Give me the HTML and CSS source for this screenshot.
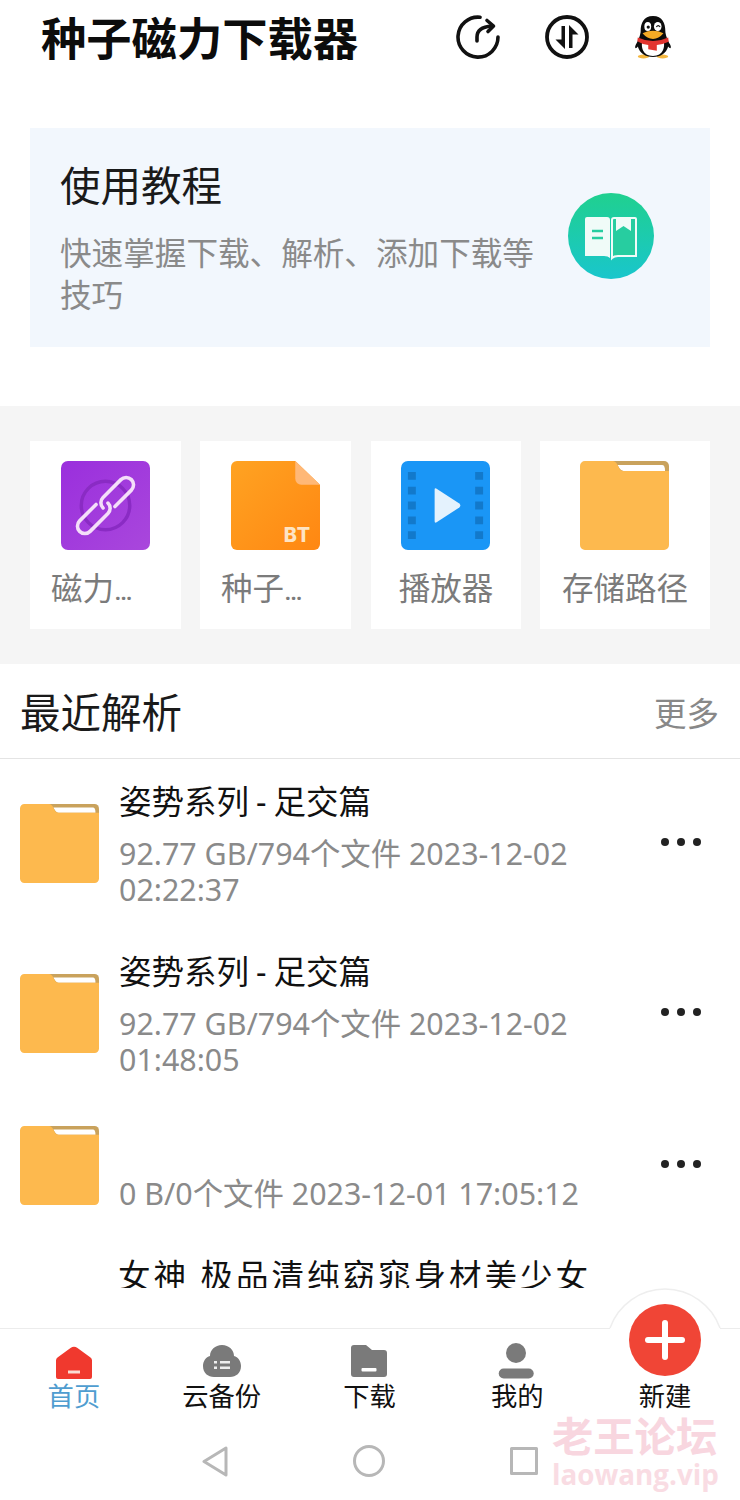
FILE: index.html

```html
<!DOCTYPE html>
<html lang="zh-CN">
<head>
  <meta charset="UTF-8" />
  <meta name="viewport" content="width=device-width, initial-scale=1.0"/>
  <title>种子磁力下载器</title>
  <link rel="stylesheet" href="styles.css">
</head>
<body>
  <svg class="defs" width="0" height="0">
    <symbol id="folder" viewBox="0 0 90 90">
      <path d="M30 0H85a5 5 0 0 1 5 5V20H30Z" fill="#c9a25c"/>
      <path d="M38 4H83q3 0 3 6H44q-3 0-6-6Z" fill="#fff"/>
      <path d="M5 0H33q3 0 5 4l2 4q1 2 4 2H90V85a5 5 0 0 1-5 5H5a5 5 0 0 1-5-5V5a5 5 0 0 1 5-5Z" fill="#fdb94e"/>
    </symbol>
    <linearGradient id="purple" x1="0" y1="0" x2="1" y2="1">
      <stop offset="0" stop-color="#9a2fdd"/>
      <stop offset="1" stop-color="#a947dc"/>
    </linearGradient>
    <linearGradient id="orange" x1="0" y1="0" x2="1" y2="1">
      <stop offset="0" stop-color="#ffa322"/>
      <stop offset="1" stop-color="#ff8712"/>
    </linearGradient>
    <linearGradient id="teal" x1="0" y1="0" x2="0" y2="1">
      <stop offset="0" stop-color="#20d08f"/>
      <stop offset="1" stop-color="#19c6cc"/>
    </linearGradient>
  </svg>

  <header class="top-bar">
    <h1 class="app-title">种子磁力下载器</h1>
    <div class="top-icons">
      <svg class="top-icon" viewBox="0 0 44 44" fill="none" stroke="#111" stroke-width="3.6" stroke-linecap="round" stroke-linejoin="round">
        <path d="M24 2.2A20 20 0 1 0 42 22"/>
        <path d="M21 26V22Q21 12 36 11"/>
        <path d="M31 5.5L37.5 11L32 16.5"/>
      </svg>
      <svg class="top-icon" viewBox="0 0 44 44">
        <circle cx="22" cy="22" r="20" fill="none" stroke="#111" stroke-width="3.8"/>
        <path d="M16.5 11H20V34L10.5 24.5H16.5Z" fill="#111"/>
        <path d="M27.5 33H24V10L33.5 19.5H27.5Z" fill="#111"/>
      </svg>
      <svg class="qq-icon" viewBox="0 0 40 46">
        <ellipse cx="10" cy="43.5" rx="6" ry="2" fill="#f4b73f"/>
        <ellipse cx="30" cy="43.5" rx="6" ry="2" fill="#f4b73f"/>
        <path d="M20 1C10 1 7 9 7 17C7 20 5 26 2 31C0 35 2 36 4 33C6 40 12 44 20 44C28 44 34 40 36 33C38 36 40 35 38 31C35 26 33 20 33 17C33 9 30 1 20 1Z" fill="#0c0c0c"/>
        <path d="M9 27C12 30 28 30 31 27C33 33 31 43 20 43C9 43 7 33 9 27Z" fill="#fff"/>
        <ellipse cx="14.5" cy="12" rx="3.6" ry="4.8" fill="#fff"/>
        <ellipse cx="25" cy="12" rx="4" ry="4.8" fill="#fff"/>
        <circle cx="15" cy="12.5" r="1.7" fill="#111"/>
        <path d="M23.5 12.5Q25.5 9.5 27.5 12.5" fill="none" stroke="#111" stroke-width="1.2"/>
        <path d="M9 19Q20 14 31 19Q26 25 20 25Q14 25 9 19Z" fill="#f5ab25"/>
        <path d="M4 23.5Q20 31 36 23.5L36.5 28Q30 31 24 31.5V37.5L15 36V31.5Q9 31 3.5 27.5Z" fill="#e2342f"/>
      </svg>
    </div>
  </header>

  <section class="guide-card">
    <div class="guide-text">
      <h2 class="guide-title">使用教程</h2>
      <p class="guide-desc">快速掌握下载、解析、添加下载等技巧</p>
    </div>
    <svg class="guide-icon" viewBox="0 0 86 86">
      <circle cx="43" cy="43" r="43" fill="url(#teal)"/>
      <path d="M19 24H39Q42 24 42 27V65Q40 63 36 63H17V26Q17 24 19 24Z" fill="#f0fbf8"/>
      <path d="M24 38H35M24 45H35" stroke="#27cda0" stroke-width="2.4"/>
      <path d="M46 25H67Q68 25 68 26V63H50Q46 63 44 65V27Q44 25 46 25Z" fill="#27cda0" stroke="#f0fbf8" stroke-width="2"/>
      <path d="M48 24H63V38L55.5 33L48 38Z" fill="#f0fbf8"/>
    </svg>
  </section>

  <section class="tools">
    <div class="tool">
      <svg class="tool-icon" viewBox="0 0 90 90">
        <rect width="90" height="90" rx="7" fill="url(#purple)"/>
        <circle cx="45" cy="45" r="24.5" fill="none" stroke="#8a2bc4" stroke-width="3.5"/>
        <g transform="translate(45 45) rotate(-45)" fill="none" stroke="#f4def9" stroke-width="3.6" stroke-linecap="round">
          <path d="M6 7.5H29.5a7.5 7.5 0 0 0 0-15H4a7.5 7.5 0 0 0-7.5 7.5"/>
          <path d="M-6-7.5H-29.5a7.5 7.5 0 0 0 0 15H-4a7.5 7.5 0 0 0 7.5-7.5"/>
        </g>
      </svg>
      <span class="tool-name cut">磁力<small>...</small></span>
    </div>
    <div class="tool">
      <svg class="tool-icon" viewBox="0 0 90 90">
        <path d="M6 0H65L90 24V84a6 6 0 0 1-6 6H6a6 6 0 0 1-6-6V6a6 6 0 0 1 6-6Z" fill="url(#orange)"/>
        <path d="M65 0L90 24H71a6 6 0 0 1-6-6Z" fill="#ffb877"/>
        <text class="bt-text" x="81" y="82" text-anchor="end">BT</text>
      </svg>
      <span class="tool-name cut">种子<small>...</small></span>
    </div>
    <div class="tool player">
      <svg class="tool-icon" viewBox="0 0 90 90">
        <rect width="90" height="90" rx="7" fill="#1a96f6"/>
        <path d="M7 11h8v8H7zM7 26h8v8H7zM7 41h8v8H7zM7 56h8v8H7zM7 71h8v8H7zM75 11h8v8h-8zM75 26h8v8h-8zM75 41h8v8h-8zM75 56h8v8h-8zM75 71h8v8h-8z" fill="#1279cb"/>
        <path d="M34 29Q34 27 36 28L59 43Q61 45 59 47L36 62Q34 63 34 61Z" fill="#e4f2fd"/>
      </svg>
      <span class="tool-name">播放器</span>
    </div>
    <div class="tool">
      <svg class="tool-icon"><use href="#folder"/></svg>
      <span class="tool-name">存储路径</span>
    </div>
  </section>

  <div class="recent-head">
    <h2 class="recent-title">最近解析</h2>
    <span class="recent-more">更多</span>
  </div>

  <ul class="recent-list">
    <li class="row">
      <svg class="row-icon"><use href="#folder"/></svg>
      <div class="row-text">
        <div class="row-title">姿势系列<span class="dash">-</span>足交篇</div>
        <div class="row-meta">92.77 GB/794个文件 2023-12-02 02:22:37</div>
      </div>
      <div class="dots"><i></i><i></i><i></i></div>
    </li>
    <li class="row">
      <svg class="row-icon"><use href="#folder"/></svg>
      <div class="row-text">
        <div class="row-title">姿势系列<span class="dash">-</span>足交篇</div>
        <div class="row-meta">92.77 GB/794个文件 2023-12-02 01:48:05</div>
      </div>
      <div class="dots"><i></i><i></i><i></i></div>
    </li>
    <li class="row">
      <svg class="row-icon"><use href="#folder"/></svg>
      <div class="row-text">
        <div class="row-title"></div>
        <div class="row-meta">0 B/0个文件 2023-12-01 17:05:12</div>
      </div>
      <div class="dots"><i></i><i></i><i></i></div>
    </li>
    <li class="row">
      <div class="row-spacer"></div>
      <div class="row-text">
        <div class="row-title wide">女神 极品清纯窈窕身材美少女</div>
      </div>
    </li>
  </ul>

  <nav class="tab-bar">
    <svg class="fab-arc" viewBox="0 0 120 42">
      <path d="M5 42V40A58.3 58.3 0 0 1 115 40V42Z" fill="#fff"/>
      <path d="M5 40A58.3 58.3 0 0 1 115 40" fill="none" stroke="#eee" stroke-width="1.5"/>
    </svg>
    <div class="tab active">
      <svg class="tab-icon" viewBox="0 0 38 34">
        <path d="M15.5 3Q19 0.5 22.5 3L35.5 12.5Q37 13.5 37 15.5V32Q37 34 35 34H3Q1 34 1 32V15.5Q1 13.5 2.5 12.5Z" fill="#f0392e"/>
        <rect x="13" y="25.5" width="12" height="3" fill="#fbdcd2"/>
      </svg>
      <span>首页</span>
    </div>
    <div class="tab">
      <svg class="tab-icon" viewBox="0 0 38 34">
        <path d="M19 0C26 0 31 5 31 11C35 12 38 16 38 21C38 28 33 32 27 32H11C5 32 0 28 0 21C0 16 3 12 7 11C7 5 12 0 19 0Z" fill="#7a7a7a"/>
        <path d="M11 16h3v2.5h-3zM17 16h10v2.5H17zM11 21.5h3v2.5h-3zM17 21.5h10v2.5H17z" fill="#eee"/>
      </svg>
      <span>云备份</span>
    </div>
    <div class="tab">
      <svg class="tab-icon" viewBox="0 0 38 34">
        <path d="M4 0H16L22 5H34Q37 5 37 8V29Q37 32 34 32H4Q1 32 1 29V3Q1 0 4 0Z" fill="#7a7a7a"/>
        <rect x="11.500" y="23" width="15" height="3.500" rx="1" fill="#fff"/>
      </svg>
      <span>下载</span>
    </div>
    <div class="tab">
      <svg class="tab-icon" viewBox="0 0 38 34">
        <circle cx="18" cy="8" r="10" fill="#7a7a7a"/>
        <rect x="0.7" y="23.5" width="35" height="10" rx="5" fill="#7a7a7a"/>
      </svg>
      <span>我的</span>
    </div>
    <div class="tab">
      <div class="tab-icon"></div>
      <span>新建</span>
    </div>
    <div class="fab"></div>
  </nav>

  <div class="sys-nav">
    <svg class="back-icon" viewBox="0 0 26 31" fill="none" stroke="#b7b7b7" stroke-width="3" stroke-linejoin="round"><path d="M24 2V29L2 15.5Z"/></svg>
    <svg class="home-icon" viewBox="0 0 32 32" fill="none" stroke="#b7b7b7" stroke-width="3"><circle cx="16" cy="16" r="14.5"/></svg>
    <svg class="recent-icon" viewBox="0 0 28 28" fill="none" stroke="#b7b7b7" stroke-width="3" stroke-linejoin="round"><rect x="1.5" y="1.5" width="25" height="25"/></svg>
  </div>

  <div class="watermark">
    <div class="wm-cn">老王论坛</div>
    <div class="wm-en">laowang.vip</div>
  </div>
</body>
</html>
```

FILE: styles.css

```css
* {
  box-sizing: border-box;
}

body {
  position: relative;
  margin: 0;
  width: 740px;
  height: 1500px;
  overflow: hidden;
  background-color: #fff;
  color: #111;
  font-family: "Noto Sans", "Noto Sans CJK SC", sans-serif;
}

.defs {
  position: absolute;
}

h1, h2, p, ul {
  margin: 0;
  padding: 0;
}

.top-bar {
  display: flex;
  align-items: center;
  justify-content: space-between;
  height: 128px;
  padding: 0 68px 50px 41px;
}

.app-title {
  font-size: 45.3px;
  font-weight: 700;
  line-height: 60px;
  color: #0c0c0c;
}

.top-icons {
  display: flex;
  align-items: center;
  gap: 45px;
  margin-bottom: 4px;
}

.top-icon {
  width: 44px;
  height: 44px;
}

.qq-icon {
  width: 38px;
  height: 44px;
}

.guide-card {
  display: flex;
  align-items: center;
  justify-content: space-between;
  height: 219px;
  margin: 0 30px;
  padding: 0 56px 0 30px;
  background-color: #f2f7fd;
}

.guide-text {
  width: 480px;
}

.guide-title {
  font-size: 40.5px;
  font-weight: 400;
  line-height: 54px;
  color: #1a1a1a;
}

.guide-desc {
  margin-top: 19px;
  font-size: 31.6px;
  line-height: 42px;
  color: #8a8a8a;
}

.guide-icon {
  width: 86px;
  height: 86px;
  margin-bottom: 3px;
}

.tools {
  display: grid;
  grid-template-columns: 151px 151px 151px 170px;
  gap: 19px;
  margin-top: 59px;
  padding: 35px 30px;
  background-color: #f5f5f5;
}

.tool {
  display: flex;
  flex-direction: column;
  align-items: center;
  height: 188px;
  padding-top: 20px;
  background-color: #fff;
}

.tool.player {
  margin-left: 1px;
}

.tool-icon {
  width: 89px;
  height: 89px;
  margin-right: 1px;
}

.bt-text {
  font-family: "Inter", "Liberation Sans", sans-serif;
  font-size: 20px;
  font-weight: 800;
  letter-spacing: 1px;
  fill: #fde4c4;
}

.tool-name {
  margin-top: 17px;
  font-size: 31.5px;
  line-height: 42px;
  color: #7b7b7b;
}

.tool-name.cut {
  align-self: flex-start;
  padding-left: 21px;
}

.tool-name small {
  margin-left: 1px;
  font-size: 20px;
  font-weight: 700;
}

.recent-head {
  display: flex;
  align-items: center;
  justify-content: space-between;
  height: 95px;
  padding: 0 21px 2px 20px;
  border-bottom: 1px solid #e4e4e4;
}

.recent-title {
  font-size: 40.5px;
  font-weight: 400;
  color: #1a1a1a;
}

.recent-more {
  margin-top: 3px;
  font-size: 32.5px;
  color: #888;
}

.recent-list {
  height: 529px;
  overflow: hidden;
  list-style: none;
}

.row {
  display: flex;
  align-items: center;
  padding: 22px 39px 21px 20px;
}

.row-icon {
  flex: none;
  width: 79px;
  height: 79px;
  margin-bottom: 2px;
}

.row-spacer {
  flex: none;
  width: 79px;
}

.row-text {
  flex: 1;
  margin-left: 20px;
}

.row-title {
  min-height: 42px;
  font-size: 32.5px;
  line-height: 42px;
  color: #111;
}

.row-title .dash {
  margin: 0 7px;
}

.row-title.wide {
  margin-left: -1px;
  letter-spacing: 3px;
}

.row-meta {
  width: 500px;
  margin-top: 13px;
  font-size: 30.4px;
  line-height: 36px;
  color: #8a8a8a;
}

.dots {
  display: flex;
  gap: 8px;
  margin-bottom: 6px;
}

.dots i {
  width: 8px;
  height: 8px;
  border-radius: 50%;
  background-color: #222;
}

.tab-bar {
  position: relative;
  display: grid;
  grid-template-columns: repeat(5, 147.8px);
  height: 92px;
  margin-top: 40px;
  border-top: 1.5px solid #ececec;
}

.tab {
  display: flex;
  flex-direction: column;
  align-items: center;
  padding-top: 16px;
  font-size: 26.3px;
  line-height: 30px;
  color: #111;
}

.tab.active {
  color: #4f9dd0;
}

.tab-icon {
  width: 38px;
  height: 34px;
  margin-bottom: 2px;
  overflow: visible;
}

.fab-arc {
  position: absolute;
  left: 605px;
  top: -41px;
  width: 120px;
  height: 42px;
}

.fab {
  position: absolute;
  left: 629px;
  top: -25px;
  width: 72px;
  height: 72px;
  border-radius: 50%;
  background-color: #f04536;
}

.fab::before,
.fab::after {
  content: "";
  position: absolute;
  background-color: #fff;
  border-radius: 3px;
}

.fab::before {
  left: 16px;
  top: 33px;
  width: 40px;
  height: 6px;
}

.fab::after {
  left: 33px;
  top: 16px;
  width: 6px;
  height: 40px;
}

.sys-nav {
  display: flex;
  align-items: center;
  justify-content: center;
  gap: 125px;
  height: 82px;
}

.back-icon {
  width: 26px;
  height: 31px;
}

.home-icon {
  width: 32px;
  height: 32px;
}

.recent-icon {
  width: 28px;
  height: 28px;
}

.watermark {
  position: absolute;
  left: 552px;
  top: 1412px;
  color: #f8d6df;
  font-family: "Noto Sans CJK SC", sans-serif;
  font-weight: 700;
}

.wm-cn {
  font-size: 41.3px;
  line-height: 44px;
}

.wm-en {
  font-family: "Open Sans", sans-serif;
  font-size: 27.8px;
  line-height: 36px;
  color: #f9dce3;
}
```
